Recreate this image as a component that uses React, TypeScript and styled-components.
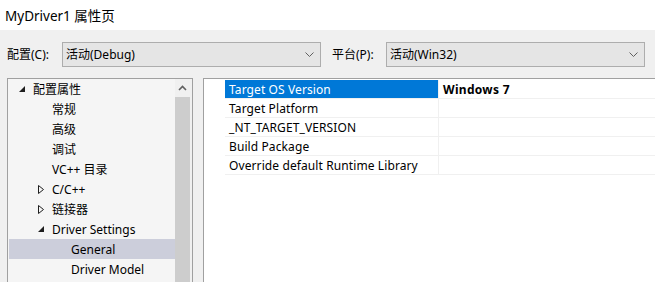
import React from "react";
import styled, { createGlobalStyle } from "styled-components";

const Global = createGlobalStyle`
  html, body { margin: 0; padding: 0; background: #f0f0f0; overflow: hidden; }
  body { font-family: "Noto Sans", "Noto Sans CJK SC", sans-serif; font-size: 12px; color: #000; }
`;

const Window = styled.div`
  width: 655px;
  height: 282px;
  display: flex;
  flex-direction: column;
  overflow: hidden;
  background: #f0f0f0;
`;

const TitleBar = styled.div`
  height: 30px;
  background: #fff;
  display: flex;
  align-items: center;
  padding-left: 5px;
  font-size: 13.5px;
  color: #000;
  flex: none;
`;

const ConfigBar = styled.div`
  height: 48px;
  display: flex;
  align-items: center;
  padding: 0 10px 0 7px;
  flex: none;
`;

const Label = styled.span<{ $w: number; $pad?: number }>`
  width: ${(p) => p.$w}px;
  padding-left: ${(p) => p.$pad ?? 0}px;
  box-sizing: border-box;
  flex: none;
  color: #000;
`;

const Combo = styled.div<{ $w: number }>`
  width: ${(p) => p.$w}px;
  height: 25px;
  box-sizing: border-box;
  border: 1px solid #adadad;
  background: #e5e5e5;
  display: flex;
  align-items: center;
  justify-content: space-between;
  padding: 0 6px 0 3px;
  flex: none;
`;

const Body = styled.div`
  flex: 1;
  display: flex;
  gap: 10px;
  padding-left: 7px;
  min-height: 0;
`;

const TreePanel = styled.div`
  width: 186px;
  box-sizing: border-box;
  border: 1px solid #a0a0a0;
  border-bottom: none;
  background: #f5f5f5;
  display: flex;
  flex: none;
`;

const TreeList = styled.div`
  flex: 1;
  display: flex;
  flex-direction: column;
`;

const TreeRow = styled.div<{ $indent: number; $sel?: boolean }>`
  height: 20px;
  display: flex;
  align-items: center;
  padding-left: ${(p) => p.$indent}px;
  margin-left: 1px;
  background: ${(p) => (p.$sel ? "#cccedb" : "transparent")};
  color: #000;
  white-space: nowrap;
`;

const Toggle = styled.span`
  width: 14px;
  display: inline-flex;
  align-items: center;
  justify-content: flex-start;
  flex: none;
`;

const Scroll = styled.div`
  width: 17px;
  flex: none;
  background: #f0f0f0;
  display: flex;
  flex-direction: column;
  align-items: flex-start;
`;

const ScrollBtn = styled.div`
  width: 15px;
  height: 18px;
  display: flex;
  align-items: center;
  justify-content: center;
`;

const Thumb = styled.div`
  width: 15px;
  flex: 1;
  background: #cdcdcd;
`;

const GridPanel = styled.div`
  flex: 1;
  box-sizing: border-box;
  border: 1px solid #a0a0a0;
  border-right: none;
  border-bottom: none;
  background: #fff;
  padding: 1px 0 0 21px;
`;

const Grid = styled.div`
  display: flex;
  flex-direction: column;
`;

const GridRow = styled.div`
  display: flex;
  height: 19px;
  box-sizing: border-box;
  border-bottom: 1px solid #f0f0f0;
`;

const NameCell = styled.div<{ $sel?: boolean }>`
  width: 214px;
  flex: none;
  box-sizing: border-box;
  padding-left: 4px;
  display: flex;
  align-items: center;
  background: ${(p) => (p.$sel ? "#0078d7" : "#fff")};
  color: ${(p) => (p.$sel ? "#fff" : "#000")};
  border-right: 1px solid #f0f0f0;
  white-space: nowrap;
  letter-spacing: 0.1px;
`;

const ValueCell = styled.div<{ $bold?: boolean }>`
  flex: 1;
  padding-left: 4px;
  display: flex;
  align-items: center;
  font-weight: ${(p) => (p.$bold ? 700 : 400)};
  letter-spacing: 0.3px;
  white-space: nowrap;
`;

const Chevron = () => (
  <svg width="9" height="5" viewBox="0 0 9 5">
    <polyline points="0.5,0.5 4.5,4.5 8.5,0.5" fill="none" stroke="#606060" strokeWidth="1" />
  </svg>
);

const Expanded = () => (
  <svg width="6" height="6" viewBox="0 0 6 6">
    <polygon points="6,0 6,6 0,6" fill="#1e1e1e" />
  </svg>
);

const Collapsed = () => (
  <svg width="6" height="9" viewBox="0 0 6 9">
    <polygon points="0.5,0.5 5.5,4.5 0.5,8.5" fill="none" stroke="#1e1e1e" strokeWidth="1" />
  </svg>
);

const UpArrow = () => (
  <svg width="9" height="6" viewBox="0 0 9 6">
    <polyline points="1,5 4.5,1.5 8,5" fill="none" stroke="#606060" strokeWidth="1.6" />
  </svg>
);

type Node = { label: string; indent: number; toggle?: "open" | "closed"; sel?: boolean };

const nodes: Node[] = [
  { label: "配置属性", indent: 10, toggle: "open" },
  { label: "常规", indent: 43 },
  { label: "高级", indent: 43 },
  { label: "调试", indent: 43 },
  { label: "VC++ 目录", indent: 43 },
  { label: "C/C++", indent: 29, toggle: "closed" },
  { label: "链接器", indent: 29, toggle: "closed" },
  { label: "Driver Settings", indent: 29, toggle: "open" },
  { label: "General", indent: 62, sel: true },
  { label: "Driver Model", indent: 62 },
];

const props = [
  { name: "Target OS Version", value: "Windows 7", sel: true },
  { name: "Target Platform", value: "" },
  { name: "_NT_TARGET_VERSION", value: "" },
  { name: "Build Package", value: "" },
  { name: "Override default Runtime Library", value: "" },
];

export default function App() {
  return (
    <>
      <Global />
      <Window>
        <TitleBar>MyDriver1 属性页</TitleBar>
        <ConfigBar>
          <Label $w={55}>配置(C):</Label>
          <Combo $w={259}>
            <span>活动(Debug)</span>
            <Chevron />
          </Combo>
          <Label $w={65} $pad={11}>平台(P):</Label>
          <Combo $w={259}>
            <span>活动(Win32)</span>
            <Chevron />
          </Combo>
        </ConfigBar>
        <Body>
          <TreePanel>
            <TreeList>
              {nodes.map((n) => (
                <TreeRow key={n.label} $indent={n.indent} $sel={n.sel}>
                  {n.toggle && <Toggle>{n.toggle === "open" ? <Expanded /> : <Collapsed />}</Toggle>}
                  {n.label}
                </TreeRow>
              ))}
            </TreeList>
            <Scroll>
              <ScrollBtn>
                <UpArrow />
              </ScrollBtn>
              <Thumb />
            </Scroll>
          </TreePanel>
          <GridPanel>
            <Grid>
              {props.map((p) => (
                <GridRow key={p.name}>
                  <NameCell $sel={p.sel}>{p.name}</NameCell>
                  <ValueCell $bold={p.sel}>{p.value}</ValueCell>
                </GridRow>
              ))}
            </Grid>
          </GridPanel>
        </Body>
      </Window>
    </>
  );
}
